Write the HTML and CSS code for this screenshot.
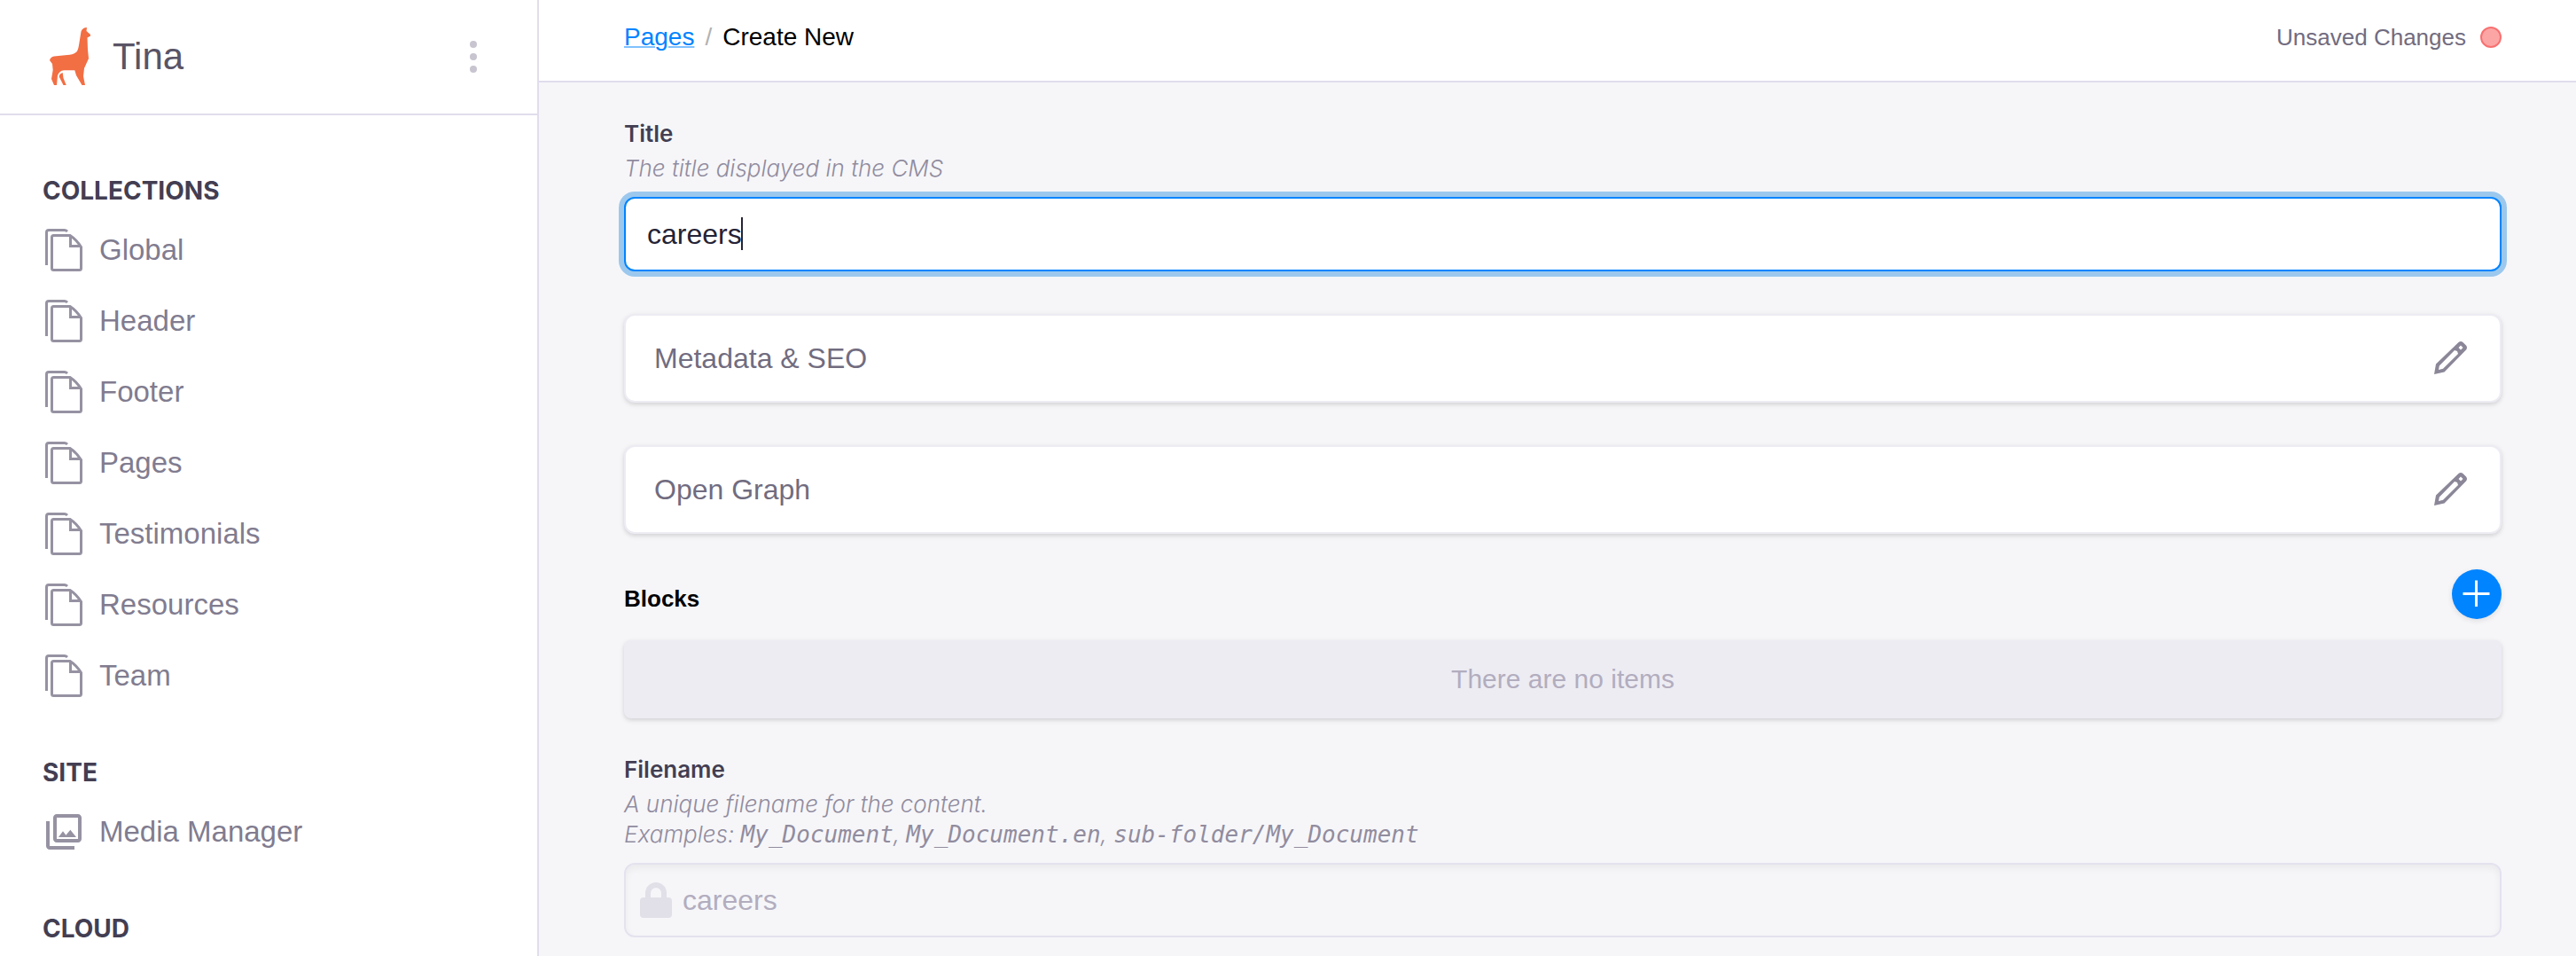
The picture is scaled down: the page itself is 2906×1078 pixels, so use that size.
FILE: index.html
```html
<!DOCTYPE html>
<html lang="en">
<head>
<meta charset="utf-8">
<meta name="viewport" content="width=device-width, initial-scale=1">
<title>Tina – Create New Page</title>
<link rel="stylesheet" href="styles.css">
</head>
<body>
<svg class="sprite" aria-hidden="true">
  <symbol id="icon-files" viewBox="0 0 48 48">
    <path d="M4.500 41V4q0-2.500 2.500-2.500h17.500q2 0 3.500 1.500" fill="none" stroke="currentColor" stroke-width="3"/>
    <path d="M12.500 7.500H31q7 4.500 12.500 13V44.500q0 2-2 2h-29q-2 0-2-2v-35q0-2 2-2zM31.500 8v11.500h12" fill="none" stroke="currentColor" stroke-width="3"/>
  </symbol>
  <symbol id="icon-pencil" viewBox="-2 -1 40 40">
    <path fill="currentColor" fill-rule="evenodd" d="M0 37 2 25.500 27.500 1q2.500-2 5 0l3.500 3.500q2 2.500 0 5L11.500 34.500zM5 32l5-1.200L27 14l-1-3-3-1L5.800 27.500zM30 4.500 27.500 7 30 9.500 32.500 7z"/>
  </symbol>
</svg>
<div class="app">
  <aside class="sidebar">
    <header class="brand">
      <svg class="brand-logo" viewBox="0 0 46 66" aria-hidden="true">
        <path fill="#f26e43" d="M42 0q-5 0-6.500 4.500L33 20q-1 7-4 8.500-3 2-9 2.500L5 32.500Q1 33 0 37l3 4 .7 7L2 58l3 7h3l1-11q2-5 7-5.700h12.300L30 54l6.500 11H40l-2-10 1-9 5-11-1-10-.5-13.500L46 9.500V8l-4.500-4z"/>
        <path fill="#f26e43" d="M14.700 51q-4 1-4 4.500L15.500 65h3.200l-3.200-8z"/>
      </svg>
      <span class="brand-name">Tina</span>
      <button class="menu-button" type="button" aria-label="Menu">
        <svg viewBox="0 0 8 38" aria-hidden="true"><g fill="#c8c5d0"><circle cx="4" cy="5" r="4"/><circle cx="4" cy="19" r="4"/><circle cx="4" cy="33" r="4"/></g></svg>
      </button>
    </header>
    <nav class="nav">
      <h2 class="nav-title">COLLECTIONS</h2>
      <ul class="nav-list">
        <li><a class="nav-link" href="#"><svg class="nav-icon"><use href="#icon-files"/></svg>Global</a></li>
        <li><a class="nav-link" href="#"><svg class="nav-icon"><use href="#icon-files"/></svg>Header</a></li>
        <li><a class="nav-link" href="#"><svg class="nav-icon"><use href="#icon-files"/></svg>Footer</a></li>
        <li><a class="nav-link" href="#"><svg class="nav-icon"><use href="#icon-files"/></svg>Pages</a></li>
        <li><a class="nav-link" href="#"><svg class="nav-icon"><use href="#icon-files"/></svg>Testimonials</a></li>
        <li><a class="nav-link" href="#"><svg class="nav-icon"><use href="#icon-files"/></svg>Resources</a></li>
        <li><a class="nav-link" href="#"><svg class="nav-icon"><use href="#icon-files"/></svg>Team</a></li>
      </ul>
      <h2 class="nav-title">SITE</h2>
      <ul class="nav-list">
        <li><a class="nav-link" href="#"><svg class="nav-icon" viewBox="0 0 24 24"><path fill="currentColor" d="M20 4v12H8V4h12m0-2H8c-1.100 0-2 .9-2 2v12c0 1.100.9 2 2 2h12c1.100 0 2-.9 2-2V4c0-1.100-.9-2-2-2zm-8.500 9.670l1.690 2.260 2.480-3.100L19 15H9zM2 6v14c0 1.100.9 2 2 2h14v-2H4V6H2z"/></svg>Media Manager</a></li>
      </ul>
      <h2 class="nav-title">CLOUD</h2>
    </nav>
  </aside>
  <main class="main">
    <header class="topbar">
      <nav class="crumbs" aria-label="Breadcrumb"><a class="crumb-link" href="#">Pages</a><span class="crumb-sep">/</span><span>Create New</span></nav>
      <p class="status">Unsaved Changes<span class="status-dot"></span></p>
    </header>
    <form class="form">
      <div class="field">
        <label class="label" for="title">Title</label>
        <p class="hint" id="title-hint">The title displayed in the CMS</p>
        <div class="control">
          <input class="input input-active" id="title" type="text" value="careers" aria-describedby="title-hint">
          <span class="caret"></span>
        </div>
      </div>
      <button class="card" type="button">Metadata &amp; SEO<svg class="card-icon"><use href="#icon-pencil"/></svg></button>
      <button class="card" type="button">Open Graph<svg class="card-icon"><use href="#icon-pencil"/></svg></button>
      <section class="blocks">
        <div class="blocks-head">
          <h2 class="blocks-title">Blocks</h2>
          <button class="add-button" type="button" aria-label="Add block"><svg viewBox="0 0 56 56" aria-hidden="true"><path d="M27.500 12.500V42M12.500 27.500h30" stroke="#fff" stroke-width="3"/></svg></button>
        </div>
        <p class="empty">There are no items</p>
      </section>
      <div class="field">
        <label class="label" for="filename">Filename</label>
        <p class="hint" id="filename-hint">A unique filename for the content.<br>Examples: <code>My_Document</code>, <code>My_Document.en</code>, <code>sub-folder/My_Document</code></p>
        <div class="control">
          <input class="input input-locked" id="filename" type="text" value="careers" aria-describedby="filename-hint" disabled>
          <svg class="lock-icon" viewBox="0 0 36 40" aria-hidden="true"><path fill="#e1dfe7" fill-rule="evenodd" d="M6 17v-5a12 12 0 0 1 24 0v5h2q4 0 4 4v15q0 4-4 4H4q-4 0-4-4V21q0-4 4-4zm6 0h12v-5a6 6 0 0 0-12 0z"/></svg>
        </div>
      </div>
    </form>
  </main>
</div>
</body>
</html>
```
FILE: styles.css
```css
* { box-sizing: border-box; }
body { margin: 0; background: #f6f6f9; color: #000; font-family: "Liberation Sans", Arial, sans-serif; font-size: 28px; line-height: 36px; }
h2, p, ul { margin: 0; padding: 0; }
button { font: inherit; cursor: pointer; }
.sprite { position: absolute; width: 0; height: 0; }
.app { display: flex; min-height: 100vh; }

/* Sidebar */
.sidebar { flex: none; width: 608px; background: #fff; border-right: 2px solid #e1ddec; }
.brand { display: flex; align-items: center; height: 130px; padding: 0 56px; border-bottom: 2px solid #e1ddec; }
.brand-logo { width: 46px; height: 66px; }
.brand-name { margin-left: 25px; color: #595466; font-size: 42px; }
.menu-button { display: flex; margin-left: auto; padding: 0 12px; border: 0; background: none; }
.menu-button svg { width: 8px; height: 38px; }
.nav { padding: 67px 48px 0; }
.nav-title { color: #433e52; font-family: Inter, sans-serif; font-size: 28px; font-weight: 700; line-height: 36px; }
.nav-list { margin-bottom: 51px; padding-top: 9px; list-style: none; }
.nav-link { display: flex; align-items: center; gap: 16px; height: 80px; color: #817c8f; font-size: 33px; text-decoration: none; }
.nav-icon { width: 48px; height: 48px; color: #9692a2; }

/* Top bar */
.main { flex: 1; min-width: 0; }
.topbar { display: flex; align-items: center; justify-content: space-between; height: 93px; padding: 0 84px 8px 96px; background: #fff; border-bottom: 2px solid #e1ddec; }
.crumbs { display: flex; gap: 12px; }
.crumb-link { color: #0084ff; text-decoration-color: #80c2ff; text-decoration-thickness: 2px; }
.crumb-sep { color: #b2b2b2; }
.status { display: flex; align-items: center; gap: 16px; color: #716c7f; font-size: 26px; }
.status-dot { width: 24px; height: 24px; border: 2px solid #f87171; border-radius: 50%; background: #fca5a5; }

/* Form */
.form { padding: 40px 84px 20px 96px; }
.label { display: block; color: #433e52; font-family: Inter, sans-serif; font-size: 26px; font-weight: 600; line-height: 36px; }
.hint { margin: 4px 0 15px; color: #918c9e; font-family: Inter, sans-serif; font-size: 26px; font-style: italic; font-weight: 300; line-height: 34px; }
.hint code { font-family: "DejaVu Sans Mono", monospace; }
.control { position: relative; }
.input { display: block; width: 100%; height: 84px; padding: 0 24px; border: 2px solid #e1ddec; border-radius: 12px; background: #fff; color: #252336; font: inherit; font-size: 32px; outline: 0; }
.input-active { border-color: #0084ff; box-shadow: 0 0 0 6px #9cc8ee; caret-color: transparent; }
.caret { position: absolute; top: 23px; left: 132px; width: 2px; height: 37px; background: #252336; }
.input-locked { padding-left: 64px; border-color: #e4e2ee; background: #f6f6f9; box-shadow: inset 0 4px 8px rgb(0 0 0 / 5%); color: #b2adbe; }
.lock-icon { position: absolute; top: 22px; left: 18px; width: 36px; height: 40px; }
.card { display: flex; align-items: center; justify-content: space-between; width: 100%; height: 100px; margin-top: 48px; padding: 0 36px 0 32px; border: 2px solid #edecf3; border-radius: 12px; background: #fff; box-shadow: 0 2px 6px rgb(0 0 0 / 10%), 0 2px 4px rgb(0 0 0 / 6%); color: #716c7f; font-size: 32px; }
.card-icon { width: 40px; height: 40px; color: #8b8798; }

/* Block list */
.blocks { margin: 40px 0; }
.blocks-head { display: flex; align-items: flex-end; justify-content: space-between; }
.blocks-title { padding-bottom: 5px; font-size: 26px; line-height: 36px; }
.add-button { display: flex; width: 56px; height: 56px; padding: 0; border: 0; border-radius: 50%; background: #0084ff; box-shadow: 0 2px 6px rgb(0 0 0 / 10%); }
.empty { margin-top: 24px; padding: 26px; border-radius: 8px; background: #edecf3; box-shadow: 0 2px 6px rgb(0 0 0 / 10%), 0 2px 4px rgb(0 0 0 / 6%); color: #b2adbe; font-size: 30px; text-align: center; }
```
